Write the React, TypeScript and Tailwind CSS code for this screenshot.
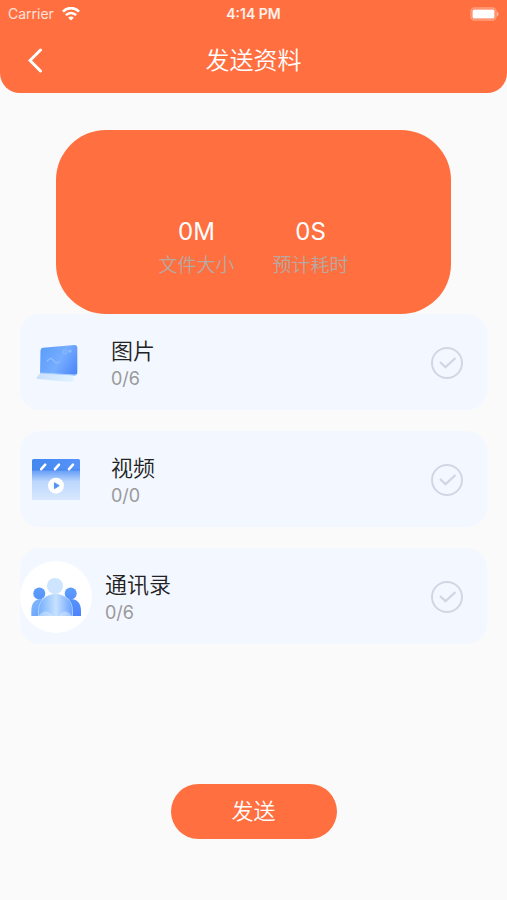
import { useState } from "react";
import type { ReactNode } from "react";

function WifiIcon() {
  return (
    <svg width="18" height="14" viewBox="0 0 18 14" fill="none" stroke="white" strokeWidth="2.6" aria-hidden="true">
      <path d="M0.9 4.6C5.4 -0.1 12.6 -0.1 17.1 4.6" />
      <path d="M3.9 8.1C6.8 5.2 11.2 5.2 14.1 8.1" />
      <path d="M9 13.5L6.2 10.7C7.8 9.2 10.2 9.2 11.8 10.7Z" fill="white" stroke="none" />
    </svg>
  );
}

function BatteryIcon() {
  return (
    <svg width="30" height="14" viewBox="0 0 30 14" fill="none" aria-hidden="true">
      <rect x="2" y="1" width="25" height="12" rx="3.5" stroke="white" strokeOpacity="0.35" strokeWidth="1.4" />
      <rect x="3.5" y="2.5" width="22" height="9" rx="1.5" fill="white" />
      <path d="M28 4.5C30 5.5 30 8.5 28 9.5Z" fill="white" fillOpacity="0.5" />
    </svg>
  );
}

function PictureIcon() {
  return (
    <svg className="size-18" viewBox="0 0 72 72" fill="none" aria-hidden="true">
      <defs>
        <linearGradient id="screen" x1="20" y1="24" x2="58" y2="46" gradientUnits="userSpaceOnUse">
          <stop stopColor="#5c9dfa" />
          <stop offset="0.5" stopColor="#76adff" />
          <stop offset="1" stopColor="#4a84fa" />
        </linearGradient>
        <linearGradient id="stand" x1="17" y1="52" x2="54" y2="52" gradientUnits="userSpaceOnUse">
          <stop stopColor="#c8e0fc" />
          <stop offset="1" stopColor="#e2f3ff" />
        </linearGradient>
      </defs>
      <path d="M23 20.8L54.5 18Q57.3 17.8 57.3 20.5V45.5Q57.3 48.5 54.3 48.5L20 47.3L20.5 23.5Q20.6 21 23 20.8Z" fill="url(#screen)" />
      <path d="M20.5 46L53.5 48V54Q53 55.3 51 55L17.5 52Q16 51.7 16.8 50.3Z" fill="url(#stand)" />
      <path d="M20.5 46L53.5 48L57 47.4" stroke="#a9cffd" strokeWidth="1" />
      <path d="M27 34L31 31L36 36L40 35" stroke="#8fbdff" strokeWidth="1.2" strokeLinecap="round" />
      <circle cx="45" cy="25" r="2" stroke="#8bbcff" strokeWidth="1" />
      <circle cx="50" cy="24" r="1.6" fill="#8bbcff" />
    </svg>
  );
}

function VideoIcon() {
  return (
    <svg className="size-18" viewBox="0 0 72 72" fill="none" aria-hidden="true">
      <defs>
        <linearGradient id="clapper" x1="0" y1="27" x2="0" y2="58" gradientUnits="userSpaceOnUse">
          <stop stopColor="#69a0f8" />
          <stop offset="0.34" stopColor="#bcd7fd" />
          <stop offset="1" stopColor="#dceafe" />
        </linearGradient>
        <linearGradient id="clapperTop" x1="12" y1="0" x2="60" y2="0" gradientUnits="userSpaceOnUse">
          <stop stopColor="#4288ef" />
          <stop offset="1" stopColor="#5793fb" />
        </linearGradient>
      </defs>
      <path d="M12 25H60V56H12Z" fill="url(#clapper)" />
      <path d="M13.5 15H58.5Q60 15 60 16.5V26H12V16.5Q12 15 13.5 15Z" fill="url(#clapperTop)" />
      <path d="M12 26H60" stroke="#3f7fe8" strokeWidth="0.8" />
      <path d="M21.2 25.2L25.2 20.7M35 25.2L39 20.7M49 25.2L53 20.7" stroke="white" strokeWidth="2.6" strokeLinecap="round" />
      <circle cx="36" cy="41.7" r="8" fill="white" />
      <path d="M34.4 38.8V44.6L39.2 41.7Z" fill="#4f94f5" stroke="#4f94f5" strokeLinejoin="round" />
    </svg>
  );
}

function ContactsIcon() {
  return (
    <svg className="size-18" viewBox="0 0 72 72" fill="none" aria-hidden="true">
      <defs>
        <linearGradient id="side" x1="0" y1="28" x2="0" y2="56" gradientUnits="userSpaceOnUse">
          <stop stopColor="#5c9cfc" />
          <stop offset="1" stopColor="#4d82fb" />
        </linearGradient>
        <linearGradient id="leftBody" x1="11" y1="40" x2="28" y2="56" gradientUnits="userSpaceOnUse">
          <stop stopColor="#85bafd" />
          <stop offset="1" stopColor="#609bfc" />
        </linearGradient>
        <linearGradient id="middle" x1="19" y1="0" x2="53" y2="0" gradientUnits="userSpaceOnUse">
          <stop stopColor="#77b0fd" />
          <stop offset="0.5" stopColor="#c7e2ff" />
          <stop offset="1" stopColor="#669ffd" />
        </linearGradient>
      </defs>
      <circle cx="36" cy="36" r="36" fill="white" />
      <circle cx="19.3" cy="32.5" r="6" fill="url(#side)" />
      <circle cx="50.7" cy="32.5" r="6" fill="url(#side)" />
      <circle cx="35" cy="25" r="8" fill="#cde5ff" />
      <path d="M11.3 55V50C11.3 42 15 38 21 38S31 42 31 50V55Z" fill="url(#leftBody)" />
      <path d="M41 55V50C41 42 45 38 51 38S61 42 61 50V55Z" fill="url(#side)" />
      <path d="M18.5 55V50C18.5 39 26 33.5 35.5 33.5S52.5 39 52.5 50V55Z" fill="url(#middle)" />
      <path d="M18.5 55V50C18.5 39 26 33.5 35.5 33.5S52.5 39 52.5 50V55" stroke="#b3d5ff" strokeWidth="0.8" />
      <path d="M18.5 55Q25 46 33 55ZM39 55Q45 46 52 55Z" fill="#e1f0ff" fillOpacity="0.45" />
    </svg>
  );
}

function Stat({ value, label }: { value: string; label: string }) {
  return (
    <div className="flex flex-col items-center">
      <span className="text-2xl leading-9 text-white">{value}</span>
      <span className="text-[19px] leading-8 font-[350] text-[#b8a8a2]">{label}</span>
    </div>
  );
}

type ItemProps = { id: string; title: string; count: string; icon: ReactNode; gap: string };

function Item({ id, title, count, icon, gap }: ItemProps) {
  const [checked, setChecked] = useState(false);
  return (
    <li className={`flex h-24 items-center rounded-[20px] bg-[#f3f7ff] pt-0.5 pr-6 ${gap}`}>
      {icon}
      <label htmlFor={id} className="flex flex-1 flex-col">
        <span className="text-[22px] leading-8 font-[350] text-[#222]">{title}</span>
        <span className="text-lg leading-6 text-[#999]">{count}</span>
      </label>
      <span className="relative size-8">
        <input
          id={id}
          type="checkbox"
          checked={checked}
          onChange={(e) => setChecked(e.target.checked)}
          className="peer block size-8 appearance-none rounded-full border-2 border-[#d2d6e4] checked:border-[#ff6f3f]"
        />
        <svg
          className="pointer-events-none absolute inset-0 size-8 text-[#d2d6e4] peer-checked:text-[#ff6f3f]"
          viewBox="0 0 32 32"
          fill="none"
          stroke="currentColor"
          strokeWidth="2.3"
          aria-hidden="true"
        >
          <path d="M9 15L14.5 20.2L24.5 11" />
        </svg>
      </span>
    </li>
  );
}

export default function App() {
  return (
    <div className="flex min-h-screen flex-col bg-[#fafafa] font-['Inter','Noto_Sans_CJK_SC',sans-serif]">
      <header className="rounded-b-[20px] bg-[#ff6f3f] text-white">
        <div className="grid h-7 grid-cols-3 items-center px-2">
          <div className="flex items-center gap-2 text-sm text-white/80">
            Carrier
            <WifiIcon />
          </div>
          <div className="text-center text-sm font-semibold text-white/90">4:14 PM</div>
          <div className="flex justify-end">
            <BatteryIcon />
          </div>
        </div>
        <div className="grid h-[65px] grid-cols-[72px_1fr_72px] items-center">
          <button type="button" aria-label="返回" className="flex h-16 items-center pl-7">
            <svg width="16" height="26" viewBox="0 0 16 26" fill="none" stroke="white" strokeWidth="3" strokeLinecap="round" aria-hidden="true">
              <path d="M12.5 2L2 12.5L12.5 23" />
            </svg>
          </button>
          <h1 className="text-center text-2xl font-[350]">发送资料</h1>
        </div>
      </header>

      <main className="flex flex-1 flex-col">
        <section className="mx-14 mt-[37px] flex h-46 items-end justify-center gap-[38px] rounded-[50px] bg-[#ff6f3f] pb-8">
          <Stat value="0M" label="文件大小" />
          <Stat value="0S" label="预计耗时" />
        </section>

        <ul className="mx-5 flex flex-col gap-[21px]">
          <Item id="pictures" title="图片" count="0/6" icon={<PictureIcon />} gap="gap-[19px]" />
          <Item id="videos" title="视频" count="0/0" icon={<VideoIcon />} gap="gap-[19px]" />
          <Item id="contacts" title="通讯录" count="0/6" icon={<ContactsIcon />} gap="gap-[13px]" />
        </ul>

        <button
          type="button"
          className="mx-auto mt-auto mb-[61px] h-[55px] w-[166px] rounded-full bg-[#ff6f3f] text-[22px] font-[350] text-white"
        >
          发送
        </button>
      </main>
    </div>
  );
}
